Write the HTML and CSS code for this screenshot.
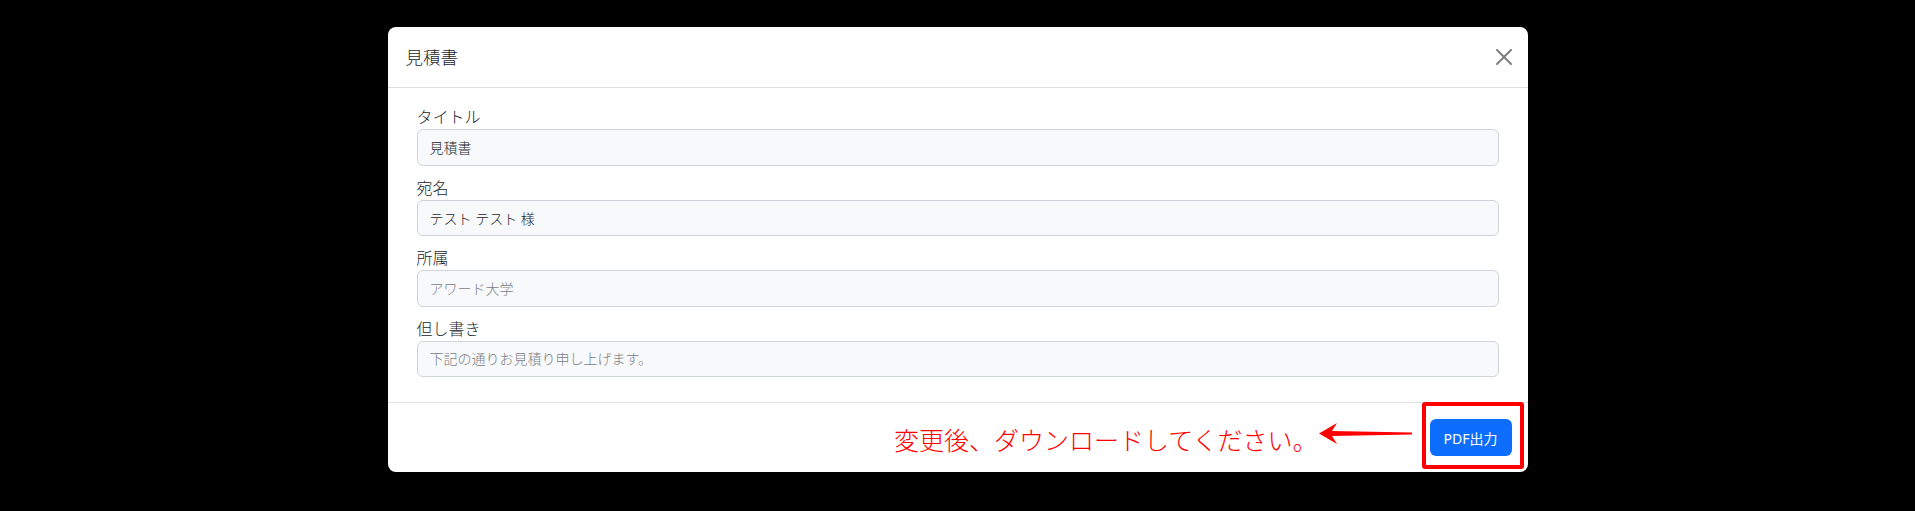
FILE: index.html
```html
<!DOCTYPE html>
<html lang="ja">
<head>
<meta charset="utf-8">
<title>見積書</title>
<link rel="stylesheet" href="styles.css">
</head>
<body>
<div class="modal-dialog">
  <div class="modal-header">
    <h5 class="modal-title">見積書</h5>
    <button class="btn-close" type="button" aria-label="Close">
      <svg viewBox="0 0 16 16" width="16" height="16"><path d="M.293.293a1 1 0 0 1 1.414 0L8 6.586 14.293.293a1 1 0 1 1 1.414 1.414L9.414 8l6.293 6.293a1 1 0 0 1-1.414 1.414L8 9.414l-6.293 6.293a1 1 0 0 1-1.414-1.414L6.586 8 .293 1.707a1 1 0 0 1 0-1.414z"/></svg>
    </button>
  </div>
  <div class="modal-body">
    <div class="field">
      <label class="field-label">タイトル</label>
      <input class="field-input" type="text" value="見積書">
    </div>
    <div class="field">
      <label class="field-label">宛名</label>
      <input class="field-input" type="text" value="テスト テスト 様">
    </div>
    <div class="field">
      <label class="field-label">所属</label>
      <input class="field-input" type="text" placeholder="アワード大学">
    </div>
    <div class="field">
      <label class="field-label">但し書き</label>
      <input class="field-input" type="text" placeholder="下記の通りお見積り申し上げます。">
    </div>
  </div>
  <div class="modal-footer">
    <span class="note">変更後、ダウンロードしてください。</span>
    <svg class="arrow" viewBox="0 0 93 21" width="93" height="21"><polygon points="0,10.5 18,0 13,8 93,9.6 93,11.4 13,13 18,21" fill="#ff0000"/></svg>
    <div class="btn-wrap">
      <button class="btn-primary" type="button">PDF出力</button>
    </div>
  </div>
</div>
</body>
</html>
```
FILE: styles.css
```css
html, body {
  margin: 0;
  padding: 0;
}
body {
  background: #000;
  font-family: "Noto Sans", "Noto Sans CJK JP", sans-serif;
  font-weight: 300;
  color: #212529;
}
.modal-dialog {
  width: 1140px;
  margin: 27px auto 0;
  background: #fff;
  border-radius: 8px;
}
.modal-header {
  box-sizing: border-box;
  height: 61px;
  padding: 0 16px 0 18px;
  display: flex;
  align-items: center;
  justify-content: space-between;
  border-bottom: 1px solid #dee2e6;
}
.modal-title {
  margin: 0;
  font-size: 17.5px;
  line-height: 28px;
  font-weight: 300;
  color: #212529;
}
.btn-close {
  width: 16px;
  height: 16px;
  padding: 0;
  border: 0;
  background: none;
  display: flex;
}
.btn-close svg {
  fill: #000;
  opacity: 0.5;
}
.modal-body {
  padding: 17px 29px 15px;
}
.field {
  display: flex;
  flex-direction: column;
  margin-bottom: 10px;
}
.field-label {
  font-size: 16px;
  line-height: 24px;
  color: #212529;
}
.field-input {
  box-sizing: border-box;
  height: 36.5px;
  padding: 0 12px;
  font-family: inherit;
  font-weight: 300;
  font-size: 14px;
  color: #212529;
  background: #f8f9fa;
  border: 1px solid #ced4da;
  border-radius: 6px;
  outline: none;
}
.field-input::placeholder {
  color: #7a8088;
  opacity: 1;
}
.modal-footer {
  border-top: 1px solid #dee2e6;
  padding: 16px;
  display: flex;
  justify-content: flex-end;
  align-items: center;
}
.note {
  color: #ff0000;
  font-size: 25px;
  font-weight: 300;
  line-height: 30px;
  margin-top: 5px;
}
.arrow {
  display: block;
  margin: -8px 18px 0 1px;
}
.btn-wrap {
  position: relative;
  display: flex;
}
.btn-wrap::after {
  content: "";
  position: absolute;
  left: -8px;
  right: -12px;
  top: -17px;
  bottom: -13px;
  border: 4px solid #ff0000;
  border-radius: 3px;
}
.btn-primary {
  width: 82px;
  height: 37px;
  padding: 0;
  font-family: inherit;
  font-weight: 400;
  font-size: 14px;
  color: #fff;
  background: #0d6efd;
  border: 0;
  border-radius: 6px;
}
```
